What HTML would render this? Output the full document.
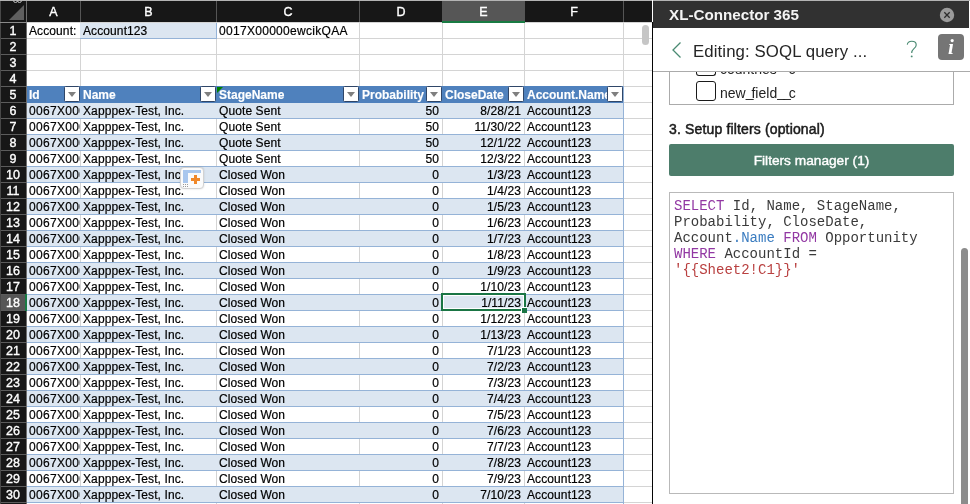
<!DOCTYPE html>
<html><head><meta charset="utf-8"><title>XL-Connector 365</title>
<style>
*{box-sizing:border-box;margin:0;padding:0}
html,body{width:970px;height:504px;overflow:hidden;background:#fff}
body{font-family:"Liberation Sans",sans-serif;position:relative}
.abs{position:absolute}
#sheet{position:absolute;left:0;top:0;width:652px;height:504px;overflow:hidden;will-change:transform}
.colh{position:absolute;top:1px;height:21px;background:#171717;color:#fff;font-size:12.5px;-webkit-text-stroke:0.35px #fff;text-align:center;line-height:22px}
.rowh{position:absolute;left:0;width:26px;height:16px;background:#171717;color:#fff;font-size:12.5px;-webkit-text-stroke:0.35px #fff;text-align:center;line-height:16px;border-top:1px solid #5c5c5c}
.cell{position:absolute;height:16px;font-size:12px;line-height:17px;color:#000;white-space:nowrap;overflow:hidden;padding-left:2px;letter-spacing:0.1px;-webkit-text-stroke:0.2px #000}
.id{letter-spacing:0.3px}
.r{text-align:right;padding-right:3px;padding-left:0}
.vl{position:absolute;width:1px;background:#d4d4d4}
.hl{position:absolute;height:1px;background:#d4d4d4}
.band{position:absolute;left:27px;width:596px;height:16px;background:#dce6f1}
.bl{position:absolute;left:27px;width:597px;height:1px;background:#95b3d7}
.hc{position:absolute;top:86px;height:17px;color:#fff;font-weight:bold;font-size:12px;line-height:19px;-webkit-text-stroke:0.15px #fff;white-space:nowrap;overflow:hidden;padding-left:2px}
.fb{position:absolute;top:86px;width:16px;height:16px;background:#fff;border:1px solid #2f4668;border-radius:1.5px}
.fb:after{content:"";position:absolute;left:3px;top:5px;border-left:4px solid transparent;border-right:4px solid transparent;border-top:5px solid #7f7f7f}
#panel{position:absolute;left:653px;top:0;width:317px;height:504px;overflow:hidden;will-change:transform}
.us{letter-spacing:-2px;position:relative;top:-1px}
.kw{color:#9238a3}.st{color:#b94040}.v2{color:#3a7cc0}
</style></head><body>

<div id="sheet">
<div class="abs" style="left:0;top:0;width:970px;height:1px;background:#b4b4b4"></div>
<div class="abs" style="left:0;top:1px;width:652px;height:21px;background:#171717"></div>
<div class="abs" style="left:13px;top:-3px;width:5px;height:6px;border:1px solid #bdbdbd;border-radius:3px"></div><div class="abs" style="left:17px;top:-3px;width:5px;height:6px;border:1px solid #bdbdbd;border-radius:3px"></div>
<div class="abs" style="left:9px;top:5px;width:0;height:0;border-left:15px solid transparent;border-bottom:15px solid #5f5f5f"></div>
<div class="colh" style="left:27px;width:53px;background:#171717">A</div>
<div class="abs" style="left:26px;top:1px;width:1px;height:21px;background:#555"></div>
<div class="colh" style="left:81px;width:135px;background:#171717">B</div>
<div class="abs" style="left:80px;top:1px;width:1px;height:21px;background:#555"></div>
<div class="colh" style="left:217px;width:142px;background:#171717">C</div>
<div class="abs" style="left:216px;top:1px;width:1px;height:21px;background:#555"></div>
<div class="colh" style="left:360px;width:82px;background:#171717">D</div>
<div class="abs" style="left:359px;top:1px;width:1px;height:21px;background:#555"></div>
<div class="colh" style="left:442px;width:83px;background:#565656">E</div>
<div class="colh" style="left:525px;width:98px;background:#171717">F</div>
<div class="abs" style="left:524px;top:1px;width:1px;height:21px;background:#555"></div>
<div class="colh" style="left:624px;width:28px;background:#171717"></div>
<div class="abs" style="left:623px;top:1px;width:1px;height:21px;background:#555"></div>
<div class="hl" style="left:26px;top:22px;width:626px"></div>
<div class="hl" style="left:26px;top:38px;width:626px"></div>
<div class="hl" style="left:26px;top:54px;width:626px"></div>
<div class="hl" style="left:26px;top:70px;width:626px"></div>
<div class="hl" style="left:26px;top:86px;width:626px"></div>
<div class="hl" style="left:26px;top:102px;width:626px"></div>
<div class="hl" style="left:26px;top:118px;width:626px"></div>
<div class="hl" style="left:26px;top:134px;width:626px"></div>
<div class="hl" style="left:26px;top:150px;width:626px"></div>
<div class="hl" style="left:26px;top:166px;width:626px"></div>
<div class="hl" style="left:26px;top:182px;width:626px"></div>
<div class="hl" style="left:26px;top:198px;width:626px"></div>
<div class="hl" style="left:26px;top:214px;width:626px"></div>
<div class="hl" style="left:26px;top:230px;width:626px"></div>
<div class="hl" style="left:26px;top:246px;width:626px"></div>
<div class="hl" style="left:26px;top:262px;width:626px"></div>
<div class="hl" style="left:26px;top:278px;width:626px"></div>
<div class="hl" style="left:26px;top:294px;width:626px"></div>
<div class="hl" style="left:26px;top:310px;width:626px"></div>
<div class="hl" style="left:26px;top:326px;width:626px"></div>
<div class="hl" style="left:26px;top:342px;width:626px"></div>
<div class="hl" style="left:26px;top:358px;width:626px"></div>
<div class="hl" style="left:26px;top:374px;width:626px"></div>
<div class="hl" style="left:26px;top:390px;width:626px"></div>
<div class="hl" style="left:26px;top:406px;width:626px"></div>
<div class="hl" style="left:26px;top:422px;width:626px"></div>
<div class="hl" style="left:26px;top:438px;width:626px"></div>
<div class="hl" style="left:26px;top:454px;width:626px"></div>
<div class="hl" style="left:26px;top:470px;width:626px"></div>
<div class="hl" style="left:26px;top:486px;width:626px"></div>
<div class="hl" style="left:26px;top:502px;width:626px"></div>
<div class="hl" style="left:26px;top:518px;width:626px"></div>
<div class="vl" style="left:26px;top:22px;height:482px"></div>
<div class="vl" style="left:80px;top:22px;height:482px"></div>
<div class="vl" style="left:216px;top:22px;height:482px"></div>
<div class="vl" style="left:359px;top:22px;height:482px"></div>
<div class="vl" style="left:442px;top:22px;height:482px"></div>
<div class="vl" style="left:524px;top:22px;height:482px"></div>
<div class="vl" style="left:623px;top:22px;height:482px"></div>
<div class="abs" style="left:442px;top:21px;width:83px;height:2px;background:#197b43"></div>
<div class="abs" style="left:80px;top:23px;width:136px;height:15px;background:#dce6f1"></div>
<div class="abs" style="left:80px;top:38px;width:137px;height:1px;background:#95b3d7"></div>
<div class="abs" style="left:216px;top:23px;width:1px;height:16px;background:#95b3d7"></div>
<div class="band" style="top:103px;height:15px"></div>
<div class="bl" style="top:102px"></div>
<div class="bl" style="top:118px"></div>
<div class="band" style="top:135px;height:15px"></div>
<div class="bl" style="top:134px"></div>
<div class="bl" style="top:150px"></div>
<div class="band" style="top:167px;height:15px"></div>
<div class="bl" style="top:166px"></div>
<div class="bl" style="top:182px"></div>
<div class="band" style="top:199px;height:15px"></div>
<div class="bl" style="top:198px"></div>
<div class="bl" style="top:214px"></div>
<div class="band" style="top:231px;height:15px"></div>
<div class="bl" style="top:230px"></div>
<div class="bl" style="top:246px"></div>
<div class="band" style="top:263px;height:15px"></div>
<div class="bl" style="top:262px"></div>
<div class="bl" style="top:278px"></div>
<div class="band" style="top:295px;height:15px"></div>
<div class="bl" style="top:294px"></div>
<div class="bl" style="top:310px"></div>
<div class="band" style="top:327px;height:15px"></div>
<div class="bl" style="top:326px"></div>
<div class="bl" style="top:342px"></div>
<div class="band" style="top:359px;height:15px"></div>
<div class="bl" style="top:358px"></div>
<div class="bl" style="top:374px"></div>
<div class="band" style="top:391px;height:15px"></div>
<div class="bl" style="top:390px"></div>
<div class="bl" style="top:406px"></div>
<div class="band" style="top:423px;height:15px"></div>
<div class="bl" style="top:422px"></div>
<div class="bl" style="top:438px"></div>
<div class="band" style="top:455px;height:15px"></div>
<div class="bl" style="top:454px"></div>
<div class="bl" style="top:470px"></div>
<div class="band" style="top:487px;height:15px"></div>
<div class="bl" style="top:486px"></div>
<div class="bl" style="top:502px"></div>
<div class="band" style="top:519px;height:15px"></div>
<div class="bl" style="top:518px"></div>
<div class="abs" style="left:27px;top:86px;width:596px;height:17px;background:#4f81bd"></div>
<div class="abs" style="left:623px;top:86px;width:1px;height:418px;background:#95b3d7"></div>
<div class="rowh" style="top:22px;background:#171717">1</div>
<div class="rowh" style="top:38px;background:#171717">2</div>
<div class="rowh" style="top:54px;background:#171717">3</div>
<div class="rowh" style="top:70px;background:#171717">4</div>
<div class="rowh" style="top:86px;background:#171717">5</div>
<div class="rowh" style="top:102px;background:#171717">6</div>
<div class="rowh" style="top:118px;background:#171717">7</div>
<div class="rowh" style="top:134px;background:#171717">8</div>
<div class="rowh" style="top:150px;background:#171717">9</div>
<div class="rowh" style="top:166px;background:#171717">10</div>
<div class="rowh" style="top:182px;background:#171717">11</div>
<div class="rowh" style="top:198px;background:#171717">12</div>
<div class="rowh" style="top:214px;background:#171717">13</div>
<div class="rowh" style="top:230px;background:#171717">14</div>
<div class="rowh" style="top:246px;background:#171717">15</div>
<div class="rowh" style="top:262px;background:#171717">16</div>
<div class="rowh" style="top:278px;background:#171717">17</div>
<div class="rowh" style="top:294px;background:#565656">18</div>
<div class="rowh" style="top:310px;background:#171717">19</div>
<div class="rowh" style="top:326px;background:#171717">20</div>
<div class="rowh" style="top:342px;background:#171717">21</div>
<div class="rowh" style="top:358px;background:#171717">22</div>
<div class="rowh" style="top:374px;background:#171717">23</div>
<div class="rowh" style="top:390px;background:#171717">24</div>
<div class="rowh" style="top:406px;background:#171717">25</div>
<div class="rowh" style="top:422px;background:#171717">26</div>
<div class="rowh" style="top:438px;background:#171717">27</div>
<div class="rowh" style="top:454px;background:#171717">28</div>
<div class="rowh" style="top:470px;background:#171717">29</div>
<div class="rowh" style="top:486px;background:#171717">30</div>
<div class="rowh" style="top:502px;background:#171717">31</div>
<div class="rowh" style="top:518px;background:#171717">32</div>
<div class="abs" style="left:0;top:1px;width:1px;height:503px;background:#484848"></div>
<div class="abs" style="left:26px;top:1px;width:1px;height:503px;background:#6e6e6e"></div>
<div class="abs" style="left:25px;top:294px;width:2px;height:17px;background:#197b43"></div>
<div class="abs" style="left:0;top:22px;width:27px;height:1px;background:#8a8a8a"></div>
<div class="cell " style="left:27px;top:23px;width:53px;height:15px">Account:</div>
<div class="cell " style="left:81px;top:23px;width:135px;height:15px">Account123</div>
<div class="cell id" style="left:217px;top:23px;width:142px;height:15px">0017X00000ewcikQAA</div>
<div class="hc" style="left:27px;width:37px">Id</div>
<div class="fb" style="left:64px"></div>
<div class="hc" style="left:81px;width:119px">Name</div>
<div class="fb" style="left:200px"></div>
<div class="hc" style="left:217px;width:126px">StageName</div>
<div class="fb" style="left:343px"></div>
<div class="hc" style="left:360px;width:66px">Probability</div>
<div class="fb" style="left:426px"></div>
<div class="hc" style="left:443px;width:65px">CloseDate</div>
<div class="fb" style="left:508px"></div>
<div class="hc" style="left:525px;width:82px">Account.Name</div>
<div class="fb" style="left:607px"></div>
<div class="abs" style="left:217px;top:87px;width:0;height:0;border-right:6px solid transparent;border-top:6px solid #008000"></div>
<div class="cell id" style="left:27px;top:103px;width:53px;height:15px">0067X00000AbCdE</div>
<div class="cell " style="left:81px;top:103px;width:135px;height:15px">Xapppex-Test, Inc.</div>
<div class="cell " style="left:217px;top:103px;width:142px;height:15px">Quote Sent</div>
<div class="cell r" style="left:360px;top:103px;width:82px;height:15px">50</div>
<div class="cell r" style="left:443px;top:103px;width:81px;height:15px">8/28/21</div>
<div class="cell " style="left:525px;top:103px;width:98px;height:15px">Account123</div>
<div class="cell id" style="left:27px;top:119px;width:53px;height:15px">0067X00000AbCdE</div>
<div class="cell " style="left:81px;top:119px;width:135px;height:15px">Xapppex-Test, Inc.</div>
<div class="cell " style="left:217px;top:119px;width:142px;height:15px">Quote Sent</div>
<div class="cell r" style="left:360px;top:119px;width:82px;height:15px">50</div>
<div class="cell r" style="left:443px;top:119px;width:81px;height:15px">11/30/22</div>
<div class="cell " style="left:525px;top:119px;width:98px;height:15px">Account123</div>
<div class="cell id" style="left:27px;top:135px;width:53px;height:15px">0067X00000AbCdE</div>
<div class="cell " style="left:81px;top:135px;width:135px;height:15px">Xapppex-Test, Inc.</div>
<div class="cell " style="left:217px;top:135px;width:142px;height:15px">Quote Sent</div>
<div class="cell r" style="left:360px;top:135px;width:82px;height:15px">50</div>
<div class="cell r" style="left:443px;top:135px;width:81px;height:15px">12/1/22</div>
<div class="cell " style="left:525px;top:135px;width:98px;height:15px">Account123</div>
<div class="cell id" style="left:27px;top:151px;width:53px;height:15px">0067X00000AbCdE</div>
<div class="cell " style="left:81px;top:151px;width:135px;height:15px">Xapppex-Test, Inc.</div>
<div class="cell " style="left:217px;top:151px;width:142px;height:15px">Quote Sent</div>
<div class="cell r" style="left:360px;top:151px;width:82px;height:15px">50</div>
<div class="cell r" style="left:443px;top:151px;width:81px;height:15px">12/3/22</div>
<div class="cell " style="left:525px;top:151px;width:98px;height:15px">Account123</div>
<div class="cell id" style="left:27px;top:167px;width:53px;height:15px">0067X00000AbCdE</div>
<div class="cell " style="left:81px;top:167px;width:135px;height:15px">Xapppex-Test, Inc.</div>
<div class="cell " style="left:217px;top:167px;width:142px;height:15px">Closed Won</div>
<div class="cell r" style="left:360px;top:167px;width:82px;height:15px">0</div>
<div class="cell r" style="left:443px;top:167px;width:81px;height:15px">1/3/23</div>
<div class="cell " style="left:525px;top:167px;width:98px;height:15px">Account123</div>
<div class="cell id" style="left:27px;top:183px;width:53px;height:15px">0067X00000AbCdE</div>
<div class="cell " style="left:81px;top:183px;width:135px;height:15px">Xapppex-Test, Inc.</div>
<div class="cell " style="left:217px;top:183px;width:142px;height:15px">Closed Won</div>
<div class="cell r" style="left:360px;top:183px;width:82px;height:15px">0</div>
<div class="cell r" style="left:443px;top:183px;width:81px;height:15px">1/4/23</div>
<div class="cell " style="left:525px;top:183px;width:98px;height:15px">Account123</div>
<div class="cell id" style="left:27px;top:199px;width:53px;height:15px">0067X00000AbCdE</div>
<div class="cell " style="left:81px;top:199px;width:135px;height:15px">Xapppex-Test, Inc.</div>
<div class="cell " style="left:217px;top:199px;width:142px;height:15px">Closed Won</div>
<div class="cell r" style="left:360px;top:199px;width:82px;height:15px">0</div>
<div class="cell r" style="left:443px;top:199px;width:81px;height:15px">1/5/23</div>
<div class="cell " style="left:525px;top:199px;width:98px;height:15px">Account123</div>
<div class="cell id" style="left:27px;top:215px;width:53px;height:15px">0067X00000AbCdE</div>
<div class="cell " style="left:81px;top:215px;width:135px;height:15px">Xapppex-Test, Inc.</div>
<div class="cell " style="left:217px;top:215px;width:142px;height:15px">Closed Won</div>
<div class="cell r" style="left:360px;top:215px;width:82px;height:15px">0</div>
<div class="cell r" style="left:443px;top:215px;width:81px;height:15px">1/6/23</div>
<div class="cell " style="left:525px;top:215px;width:98px;height:15px">Account123</div>
<div class="cell id" style="left:27px;top:231px;width:53px;height:15px">0067X00000AbCdE</div>
<div class="cell " style="left:81px;top:231px;width:135px;height:15px">Xapppex-Test, Inc.</div>
<div class="cell " style="left:217px;top:231px;width:142px;height:15px">Closed Won</div>
<div class="cell r" style="left:360px;top:231px;width:82px;height:15px">0</div>
<div class="cell r" style="left:443px;top:231px;width:81px;height:15px">1/7/23</div>
<div class="cell " style="left:525px;top:231px;width:98px;height:15px">Account123</div>
<div class="cell id" style="left:27px;top:247px;width:53px;height:15px">0067X00000AbCdE</div>
<div class="cell " style="left:81px;top:247px;width:135px;height:15px">Xapppex-Test, Inc.</div>
<div class="cell " style="left:217px;top:247px;width:142px;height:15px">Closed Won</div>
<div class="cell r" style="left:360px;top:247px;width:82px;height:15px">0</div>
<div class="cell r" style="left:443px;top:247px;width:81px;height:15px">1/8/23</div>
<div class="cell " style="left:525px;top:247px;width:98px;height:15px">Account123</div>
<div class="cell id" style="left:27px;top:263px;width:53px;height:15px">0067X00000AbCdE</div>
<div class="cell " style="left:81px;top:263px;width:135px;height:15px">Xapppex-Test, Inc.</div>
<div class="cell " style="left:217px;top:263px;width:142px;height:15px">Closed Won</div>
<div class="cell r" style="left:360px;top:263px;width:82px;height:15px">0</div>
<div class="cell r" style="left:443px;top:263px;width:81px;height:15px">1/9/23</div>
<div class="cell " style="left:525px;top:263px;width:98px;height:15px">Account123</div>
<div class="cell id" style="left:27px;top:279px;width:53px;height:15px">0067X00000AbCdE</div>
<div class="cell " style="left:81px;top:279px;width:135px;height:15px">Xapppex-Test, Inc.</div>
<div class="cell " style="left:217px;top:279px;width:142px;height:15px">Closed Won</div>
<div class="cell r" style="left:360px;top:279px;width:82px;height:15px">0</div>
<div class="cell r" style="left:443px;top:279px;width:81px;height:15px">1/10/23</div>
<div class="cell " style="left:525px;top:279px;width:98px;height:15px">Account123</div>
<div class="cell id" style="left:27px;top:295px;width:53px;height:15px">0067X00000AbCdE</div>
<div class="cell " style="left:81px;top:295px;width:135px;height:15px">Xapppex-Test, Inc.</div>
<div class="cell " style="left:217px;top:295px;width:142px;height:15px">Closed Won</div>
<div class="cell r" style="left:360px;top:295px;width:82px;height:15px">0</div>
<div class="cell r" style="left:443px;top:295px;width:81px;height:15px">1/11/23</div>
<div class="cell " style="left:525px;top:295px;width:98px;height:15px">Account123</div>
<div class="cell id" style="left:27px;top:311px;width:53px;height:15px">0067X00000AbCdE</div>
<div class="cell " style="left:81px;top:311px;width:135px;height:15px">Xapppex-Test, Inc.</div>
<div class="cell " style="left:217px;top:311px;width:142px;height:15px">Closed Won</div>
<div class="cell r" style="left:360px;top:311px;width:82px;height:15px">0</div>
<div class="cell r" style="left:443px;top:311px;width:81px;height:15px">1/12/23</div>
<div class="cell " style="left:525px;top:311px;width:98px;height:15px">Account123</div>
<div class="cell id" style="left:27px;top:327px;width:53px;height:15px">0067X00000AbCdE</div>
<div class="cell " style="left:81px;top:327px;width:135px;height:15px">Xapppex-Test, Inc.</div>
<div class="cell " style="left:217px;top:327px;width:142px;height:15px">Closed Won</div>
<div class="cell r" style="left:360px;top:327px;width:82px;height:15px">0</div>
<div class="cell r" style="left:443px;top:327px;width:81px;height:15px">1/13/23</div>
<div class="cell " style="left:525px;top:327px;width:98px;height:15px">Account123</div>
<div class="cell id" style="left:27px;top:343px;width:53px;height:15px">0067X00000AbCdE</div>
<div class="cell " style="left:81px;top:343px;width:135px;height:15px">Xapppex-Test, Inc.</div>
<div class="cell " style="left:217px;top:343px;width:142px;height:15px">Closed Won</div>
<div class="cell r" style="left:360px;top:343px;width:82px;height:15px">0</div>
<div class="cell r" style="left:443px;top:343px;width:81px;height:15px">7/1/23</div>
<div class="cell " style="left:525px;top:343px;width:98px;height:15px">Account123</div>
<div class="cell id" style="left:27px;top:359px;width:53px;height:15px">0067X00000AbCdE</div>
<div class="cell " style="left:81px;top:359px;width:135px;height:15px">Xapppex-Test, Inc.</div>
<div class="cell " style="left:217px;top:359px;width:142px;height:15px">Closed Won</div>
<div class="cell r" style="left:360px;top:359px;width:82px;height:15px">0</div>
<div class="cell r" style="left:443px;top:359px;width:81px;height:15px">7/2/23</div>
<div class="cell " style="left:525px;top:359px;width:98px;height:15px">Account123</div>
<div class="cell id" style="left:27px;top:375px;width:53px;height:15px">0067X00000AbCdE</div>
<div class="cell " style="left:81px;top:375px;width:135px;height:15px">Xapppex-Test, Inc.</div>
<div class="cell " style="left:217px;top:375px;width:142px;height:15px">Closed Won</div>
<div class="cell r" style="left:360px;top:375px;width:82px;height:15px">0</div>
<div class="cell r" style="left:443px;top:375px;width:81px;height:15px">7/3/23</div>
<div class="cell " style="left:525px;top:375px;width:98px;height:15px">Account123</div>
<div class="cell id" style="left:27px;top:391px;width:53px;height:15px">0067X00000AbCdE</div>
<div class="cell " style="left:81px;top:391px;width:135px;height:15px">Xapppex-Test, Inc.</div>
<div class="cell " style="left:217px;top:391px;width:142px;height:15px">Closed Won</div>
<div class="cell r" style="left:360px;top:391px;width:82px;height:15px">0</div>
<div class="cell r" style="left:443px;top:391px;width:81px;height:15px">7/4/23</div>
<div class="cell " style="left:525px;top:391px;width:98px;height:15px">Account123</div>
<div class="cell id" style="left:27px;top:407px;width:53px;height:15px">0067X00000AbCdE</div>
<div class="cell " style="left:81px;top:407px;width:135px;height:15px">Xapppex-Test, Inc.</div>
<div class="cell " style="left:217px;top:407px;width:142px;height:15px">Closed Won</div>
<div class="cell r" style="left:360px;top:407px;width:82px;height:15px">0</div>
<div class="cell r" style="left:443px;top:407px;width:81px;height:15px">7/5/23</div>
<div class="cell " style="left:525px;top:407px;width:98px;height:15px">Account123</div>
<div class="cell id" style="left:27px;top:423px;width:53px;height:15px">0067X00000AbCdE</div>
<div class="cell " style="left:81px;top:423px;width:135px;height:15px">Xapppex-Test, Inc.</div>
<div class="cell " style="left:217px;top:423px;width:142px;height:15px">Closed Won</div>
<div class="cell r" style="left:360px;top:423px;width:82px;height:15px">0</div>
<div class="cell r" style="left:443px;top:423px;width:81px;height:15px">7/6/23</div>
<div class="cell " style="left:525px;top:423px;width:98px;height:15px">Account123</div>
<div class="cell id" style="left:27px;top:439px;width:53px;height:15px">0067X00000AbCdE</div>
<div class="cell " style="left:81px;top:439px;width:135px;height:15px">Xapppex-Test, Inc.</div>
<div class="cell " style="left:217px;top:439px;width:142px;height:15px">Closed Won</div>
<div class="cell r" style="left:360px;top:439px;width:82px;height:15px">0</div>
<div class="cell r" style="left:443px;top:439px;width:81px;height:15px">7/7/23</div>
<div class="cell " style="left:525px;top:439px;width:98px;height:15px">Account123</div>
<div class="cell id" style="left:27px;top:455px;width:53px;height:15px">0067X00000AbCdE</div>
<div class="cell " style="left:81px;top:455px;width:135px;height:15px">Xapppex-Test, Inc.</div>
<div class="cell " style="left:217px;top:455px;width:142px;height:15px">Closed Won</div>
<div class="cell r" style="left:360px;top:455px;width:82px;height:15px">0</div>
<div class="cell r" style="left:443px;top:455px;width:81px;height:15px">7/8/23</div>
<div class="cell " style="left:525px;top:455px;width:98px;height:15px">Account123</div>
<div class="cell id" style="left:27px;top:471px;width:53px;height:15px">0067X00000AbCdE</div>
<div class="cell " style="left:81px;top:471px;width:135px;height:15px">Xapppex-Test, Inc.</div>
<div class="cell " style="left:217px;top:471px;width:142px;height:15px">Closed Won</div>
<div class="cell r" style="left:360px;top:471px;width:82px;height:15px">0</div>
<div class="cell r" style="left:443px;top:471px;width:81px;height:15px">7/9/23</div>
<div class="cell " style="left:525px;top:471px;width:98px;height:15px">Account123</div>
<div class="cell id" style="left:27px;top:487px;width:53px;height:15px">0067X00000AbCdE</div>
<div class="cell " style="left:81px;top:487px;width:135px;height:15px">Xapppex-Test, Inc.</div>
<div class="cell " style="left:217px;top:487px;width:142px;height:15px">Closed Won</div>
<div class="cell r" style="left:360px;top:487px;width:82px;height:15px">0</div>
<div class="cell r" style="left:443px;top:487px;width:81px;height:15px">7/10/23</div>
<div class="cell " style="left:525px;top:487px;width:98px;height:15px">Account123</div>
<div class="cell id" style="left:27px;top:503px;width:53px;height:15px">0067X00000AbCdE</div>
<div class="cell " style="left:81px;top:503px;width:135px;height:15px">Xapppex-Test, Inc.</div>
<div class="cell " style="left:217px;top:503px;width:142px;height:15px">Closed Won</div>
<div class="cell r" style="left:360px;top:503px;width:82px;height:15px">0</div>
<div class="cell r" style="left:443px;top:503px;width:81px;height:15px">7/11/23</div>
<div class="cell " style="left:525px;top:503px;width:98px;height:15px">Account123</div>
<div class="abs" style="left:441px;top:293px;width:85px;height:18px;border:2px solid #1a7544;box-shadow:inset 0 0 0 1px #fff"></div>
<div class="abs" style="left:521px;top:307px;width:6px;height:6px;background:#1a7544;border:1px solid #fff;border-right:0;border-bottom:0"></div>
<div class="abs" style="left:180px;top:167px;width:24px;height:22px;background:#fbfbfb;border:1px solid #d2d2d2;border-radius:4px;box-shadow:0 0 2px rgba(0,0,0,0.15)">
<div class="abs" style="left:2px;top:2px;width:18px;height:3px;background:#a9c7ee"></div>
<div class="abs" style="left:2px;top:2px;width:5px;height:13px;background:#a9c7ee"></div>
<div class="abs" style="left:10px;top:10px;width:9px;height:3px;background:#f0882a"></div>
<div class="abs" style="left:13px;top:7px;width:3px;height:9px;background:#f0882a"></div>
<div class="abs" style="left:2px;top:16px;width:1px;height:1px;background:#999;box-shadow:2px 0 #999,4px 0 #999,0 2px #999,2px 2px #999,4px 2px #999"></div>
</div>
<div class="abs" style="left:642px;top:25px;width:7px;height:20px;border-radius:4px;background:#c6c6c6"></div>
</div>
<div class="abs" style="left:652px;top:22px;width:1px;height:482px;background:#050505"></div>
<div id="panel">
<div class="abs" style="left:0;top:0;width:317px;height:1px;background:#b4b4b4"></div>
<div class="abs" style="left:0;top:1px;width:316px;height:27px;background:#313131"></div>
<div class="abs" style="left:16px;top:1px;height:27px;line-height:28px;color:#f4f4f4;font-weight:bold;font-size:15.2px;white-space:nowrap" id="ttl">XL-Connector 365</div>
<svg class="abs" style="left:286px;top:7px" width="16" height="16" viewBox="0 0 16 16"><circle cx="8" cy="8" r="7.2" fill="#9b9b9b"/><path d="M5.3 5.3 L10.7 10.7 M10.7 5.3 L5.3 10.7" stroke="#2d2d2d" stroke-width="1.3" fill="none"/></svg>
<svg class="abs" style="left:18px;top:41px" width="12" height="18" viewBox="0 0 12 18"><path d="M9.5 1.5 L2 9 L9.5 16.5" stroke="#4a8a72" stroke-width="1.3" fill="none"/></svg>
<div class="abs" style="left:40px;top:39.5px;font-size:16.8px;letter-spacing:0.1px;line-height:24px;color:#252525;white-space:nowrap" id="edt">Editing: SOQL query ...</div>
<svg class="abs" style="left:252px;top:39px" width="14" height="20" viewBox="0 0 14 20" id="qm"><path d="M2.3 5.6 C2.6 3.2 4.6 2.3 6.8 2.3 C9.4 2.3 11.2 3.7 11.2 5.9 C11.2 7.8 10 8.8 8.7 9.9 C7.4 11 6.7 11.9 6.7 14" stroke="#4a8a72" stroke-width="1.15" fill="none"/><circle cx="6.7" cy="17.4" r="0.95" fill="#4a8a72"/></svg>
<div class="abs" style="left:285px;top:34px;width:26px;height:26px;border-radius:4px;background:#757575;color:#fff;font-family:'Liberation Serif',serif;font-style:italic;font-weight:bold;font-size:21px;line-height:27px;text-align:center">i</div>
<div class="abs" style="left:0;top:71px;width:317px;height:1px;background:#ababab"></div>
<div class="abs" style="left:16px;top:72px;width:285px;height:33px;border:1px solid #ababab;border-top:0"></div>
<div class="abs" style="left:0;top:28px;width:317px;height:43px;background:transparent"></div>
<div class="abs" style="left:43px;top:72px;width:20px;height:4px;border:1px solid #1a1a1a;border-top:0;border-radius:0 0 3px 3px"></div>
<div class="abs" style="left:67px;top:72px;width:80px;height:3px;overflow:hidden"><div style="font-size:14px;line-height:14px;margin-top:-10px;color:#222">countries<span class="us">__</span>c</div></div>
<div class="abs" style="left:43px;top:81px;width:20px;height:20px;border:1px solid #1a1a1a;border-radius:3px"></div>
<div class="abs" style="left:67px;top:85px;font-size:14px;line-height:16px;color:#222;white-space:nowrap" id="nf">new<span class="us">_</span>field<span class="us">__</span>c</div>
<div class="abs" style="left:16px;top:121px;font-size:14px;letter-spacing:0.15px;line-height:16px;color:#1a1a1a;white-space:nowrap;-webkit-text-stroke:0.5px #1a1a1a" id="sf">3. Setup filters (optional)</div>
<div class="abs" style="left:16px;top:144px;width:285px;height:32px;background:#4d7d6b;border-radius:2px;color:#fff;font-size:13.7px;line-height:33px;text-align:center;-webkit-text-stroke:0.4px #fff"><span id="fm">Filters manager (1)</span></div>
<div class="abs" style="left:16px;top:192px;width:285px;height:302px;border:1px solid #b9b9b9;background:#fff"></div>
<pre class="abs" style="left:21px;top:198px;font-family:'Liberation Mono',monospace;font-size:14px;line-height:16px;color:#3a3a3a" id="code"><span class="kw">SELECT</span> Id, Name, StageName,
Probability, CloseDate,
Account<span class="v2">.Name</span> <span class="kw">FROM</span> Opportunity
<span class="kw">WHERE</span> AccountId =
<span class="st">'{{Sheet2!C1}}'</span></pre>
<div class="abs" style="left:308px;top:248px;width:7px;height:270px;border-radius:4px;background:#8c8c8c"></div>
</div>

</body></html>
